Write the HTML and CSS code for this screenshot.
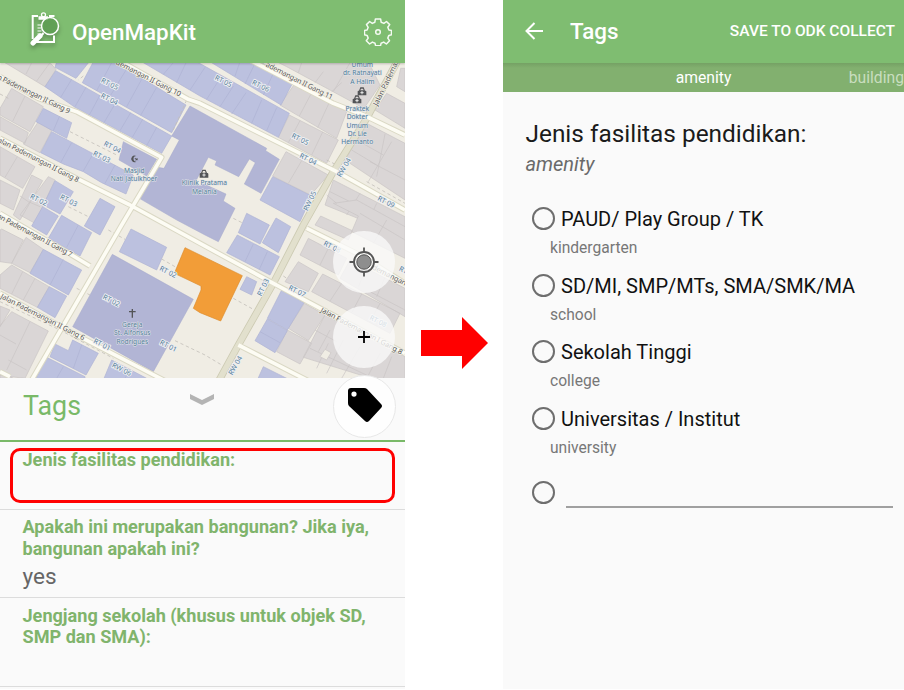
FILE: index.html
```html
<!DOCTYPE html>
<html lang="id">
<head>
<meta charset="utf-8">
<title>OpenMapKit</title>
<link rel="stylesheet" href="styles.css">
</head>
<body>
<main class="stage">
<section class="phone phone-map">
  <header class="appbar">
    <svg class="logo" viewBox="0 0 36 40" width="36" height="40">
      <g fill="none" stroke="#fff">
        <path d="M12 6H6.700V29M8 32H28V25.500M23 6h5.500" stroke-width="2"/>
        <path d="M11.500 15h3.500M11.500 18h3.500M11.500 21h4M11.500 24h4" stroke-width="1.200"/>
        <circle cx="17.500" cy="4.800" r="2" stroke-width="1.300"/>
        <path d="M12.500 8h9.500" stroke-width="3.500"/>
        <path d="M17.500 23 14 27" stroke-width="2"/>
        <path d="M14 26 7 33" stroke-width="5" stroke-linecap="round"/>
        <circle cx="24" cy="16" r="8.500" fill="#5fa154" fill-opacity=".75" stroke-width="1.500"/>
      </g>
    </svg>
    <h1 class="app-title">OpenMapKit</h1>
    <svg class="gear" viewBox="0 0 28 28" width="28" height="28" fill="none" stroke="#f4faf2" stroke-width="1.500" stroke-linejoin="round">
      <path d="M11.400 1h5.200l.6 3.300 2.700 1.100 2.600-1.900 3.200 3.100-1.900 2.700 1.100 2.700 2.600.4v4.400l-2.600.6-1.100 2.700 1.700 2.600-3.100 3.300-2.700-1.900-2.600 1.100-.6 2.600h-4.900l-.6-2.600-2.600-1.100L5.600 26l-3.300-3.200 1.900-2.700-1.100-2.700-2.600-.6v-4.400l2.600-.4 1.100-2.700-1.700-2.700 3.100-3.100 2.700 1.900 2.500-1.100z"/>
      <circle cx="14" cy="14" r="2.300"/>
    </svg>
  </header>
  <div class="map">
    <svg class="map-art" viewBox="0 189 1215 945" width="405" height="315">
      <rect y="189" width="1215" height="945" fill="#f0ede4"/>
      <g class="gray">
        <g transform="translate(0 180)">
          <path d="M15 8H150L168 28 135 80ZM95 8 78 42M150 8 110 63M35 85 130 140 90 215 0 165V145ZM75 108 38 184M0 170 85 218 75 250 0 210ZM115 185 155 212 120 278 70 252ZM0 260 105 320 68 385 0 345ZM52 290 15 352M0 360 60 390 40 450 0 430ZM95 345 128 362 60 480 40 465ZM145 350 165 360 105 490 60 465ZM60 408 85 425M85 425 120 440"/>
        </g>
        <g transform="translate(600 180)">
          <path d="M230 5H505L540 75 492 145 260 20ZM305 8 295 38M370 35 345 68M425 68 395 95M450 8 400 95M285 70 440 155 410 235 240 135ZM335 98 298 168M388 127 353 203M268 165 415 240 380 310 235 232ZM300 182 265 248M368 216 335 285M258 275 385 345 332 405 218 348ZM305 302 265 370M560 100 615 130V205L525 150ZM602 25H615V95L590 80ZM500 190 615 250V420L435 300ZM555 222 530 350M470 240 550 285M455 270 530 315M575 245 505 365M510 305 615 360M400 360 615 470V500L510 490 375 435ZM480 400 440 465M530 430 505 485M390 395 520 460"/>
        </g>
        <g transform="translate(0 660)">
          <path d="M5 27 70 60 35 130 0 125V30ZM78 52 130 88 90 158 35 130ZM35 135 147 200 112 262 0 205V165ZM68 155 35 222M105 175 70 240M0 258 30 270 0 320ZM35 275 145 333 75 475-10 465V330ZM90 305 20 450M0 345 48 372M25 420 80 450M0 455 40 475H0Z"/>
        </g>
        <g transform="translate(600 660)">
          <path d="M362-12 457 32 445 60 345 15ZM470-60 615 20V115L455 35 475-12 400-50ZM410-50 380-75M480-20 615 60M560 0 520 70M325 55 440 115 415 165 300 105ZM385 85 360 135M295 125 355 160 325 215 255 185ZM368 162 600 280 570 340 335 215ZM425 190 390 243M485 222 455 278M540 250 510 305M450 120 615 205V290L420 175ZM500 145 475 200M555 172 530 230M510 215 615 270M313 250 375 285 325 362 265 325ZM262 330 335 370 300 432 230 395ZM375 285 615 410V480H530L310 412ZM345 330 410 365M385 370 350 445M430 360 380 460M480 380 425 475M540 400 500 475M330 385 520 475M575 410 550 475M390 330 355 395"/>
          <path class="gap" d="M375 388 393 398 380 420 360 410Z"/>
        </g>
      </g>
      <g class="blue">
        <g transform="translate(0 180)">
          <path d="M170 5H268L228 55 165 22ZM167 32 515 228 485 280 225 142 135 80ZM215 58 182 112M258 82 225 140M300 105 268 165M345 132 312 188M392 158 360 212M428 178 397 232M470 202 440 257M280 5H345L558 135 515 218 247 68ZM335 8 290 92M378 30 328 112M425 58 380 140M470 82 422 166M425 5H590L868 160 835 232 600 108ZM520 8 490 43M558 8 530 68M615 22 570 90M660 55 620 118M700 78 660 140M738 98 695 162M785 120 755 190M830 143 800 212M630 5H780L880 65 843 135ZM720 5 705 48M765 10 735 72M820 40 790 105M130 145 215 188 200 235 108 185ZM178 170 160 212M155 215 400 345 378 402 305 368 250 335 190 312 122 278ZM215 248 182 308M280 280 250 333M345 315 315 370M165 362 220 395 180 462 130 435ZM300 415 345 440 300 525 253 498ZM128 440 175 468 140 525 95 498Z"/>
        </g>
        <g transform="translate(600 180)"><path d="M218 350 335 408 300 485 180 420Z"/></g>
        <g transform="translate(0 660)">
          <path d="M185-14 275 38 240 108 145 55ZM235 15 200 82M393 27 500 82 470 150 358 95ZM130 88 245 150 205 225 90 160ZM190 118 150 195M148 200 200 228 165 293 112 262ZM165 372 205 392 218 360 295 400 258 465 150 410ZM245 375 220 445M140 412 255 470V480H105ZM190 440 170 475M335 420 440 475V480H310ZM390 448 375 475"/>
        </g>
        <g transform="translate(600 660)">
          <path d="M140-20 208 15 180 72 115 38ZM228-6 272 20 235 98 187 68ZM112 45 238 110 210 165 80 98ZM160 72 135 125M202 95 178 148M140 170 170 185 155 225 120 208ZM245 210 312 248 262 330 202 295ZM202 297 262 332 225 398 165 362ZM180 335 240 368M190 440 270 480H172Z"/>
        </g>
      </g>
      <g class="civic">
        <g transform="translate(0 180)">
          <path d="M570 138 800 265 797 272 838 298 783 400 733 372 766 308 748 297 716 350 645 315 650 303 625 292 585 368 600 378 612 372 678 402 670 423 705 445 655 545 615 525 530 480 418 415 472 322 492 325 538 240 515 228ZM370 245 470 298 440 348 357 300Z"/>
        </g>
        <path d="M337 763 580 898 460 1115 218 980Z"/>
      </g>
      <path class="selected" d="M555 743 727 827 662 963 600 938 580 925 603 870V858L523 820Z"/>
      <g class="paths">
        <path d="M210 395 350 465M560 300 520 390M0 282 25 295M205 620 265 650M325 690 375 718M485 777 525 800M230 865 270 885M700 895 760 928M525 1022 615 1065 665 1095M250 228 235 240M1100 545 1215 610M0 905 180 990 340 1075M980 480 1010 495M850 828 865 838M700 655 730 670"/>
      </g>
      <g class="road-main casing"><path d="M1210 150 1100 355 1000 515 910 675 820 850 715 1035 655 1145"/></g>
      <g class="road casing">
        <path d="M320 160 565 298 600 310 1010 515 1215 630M0 230 115 295 230 335 485 472 365 675 95 1140M0 415 200 520 390 615 600 730 820 850 1215 1060M0 640 215 765 270 798M0 880 210 995 500 1145M740 175 1000 310 1090 345 1215 405M920 685 1080 765 1215 850M715 1035 930 1145M0 1115 30 1130"/>
      </g>
      <g class="road-main"><path d="M1210 150 1100 355 1000 515 910 675 820 850 715 1035 655 1145"/></g>
      <g class="road">
        <path d="M320 160 565 298 600 310 1010 515 1215 630M0 230 115 295 230 335 485 472 365 675 95 1140M0 415 200 520 390 615 600 730 820 850 1215 1060M0 640 215 765 270 798M0 880 210 995 500 1145M740 175 1000 310 1090 345 1215 405M920 685 1080 765 1215 850M715 1035 930 1145M0 1115 30 1130"/>
      </g>
      <g class="street">
        <text transform="translate(-10 236) rotate(26)" textLength="240">n Pademangan II Gang 9</text>
        <text transform="translate(346 192) rotate(27)" textLength="216">demangan II Gang 10</text>
        <text transform="translate(796 199) rotate(27)" textLength="222">ademangan II Gang 11</text>
        <text transform="translate(-8 425) rotate(27)" textLength="270">alan Pademangan II Gang 8</text>
        <text transform="translate(-10 653) rotate(28)" textLength="252">an Pademangan II Gang 7</text>
        <text transform="translate(0 894) rotate(27)" textLength="280">Jalan Pademangan II Gang 6</text>
        <text transform="translate(960 935) rotate(28)" textLength="275">Jalan Pademangan I Gang 8</text>
        <text transform="translate(1115 807) rotate(27)">demangan</text>
        <text transform="translate(1132 319) rotate(-64)">Jalan Pademan</text>
      </g>
      <g class="district">
        <text transform="translate(326 258) rotate(27)">RT 05</text><text transform="translate(325 304) rotate(27)">RT 04</text>
        <text transform="translate(334 448) rotate(27)">RT 04</text><text transform="translate(302 477) rotate(27)">RT 03</text>
        <text transform="translate(113 606) rotate(27)">RT 02</text><text transform="translate(203 608) rotate(27)">RT 03</text>
        <text transform="translate(667 250) rotate(27)">RT 05</text><text transform="translate(779 264) rotate(27)">RT 06</text>
        <text transform="translate(897 424) rotate(27)">RT 05</text><text transform="translate(921 484) rotate(27)">RT 04</text>
        <text transform="translate(1155 612) rotate(27)">RT 09</text><text transform="translate(1038 506) rotate(-60)">RW 04</text>
        <text transform="translate(936 606) rotate(-64)">RW 05</text><text transform="translate(331 908) rotate(27)">RT 02</text>
        <text transform="translate(501 822) rotate(27)">RT 02</text><text transform="translate(303 1040) rotate(27)">RT 01</text>
        <text transform="translate(502 1044) rotate(27)">RT 01</text><text transform="translate(362 1114) rotate(27)">RW 06</text>
        <text transform="translate(993 747) rotate(27)">RT 08</text><text transform="translate(888 880) rotate(27)">RT 07</text>
        <text transform="translate(796 865) rotate(-64)">RT 03</text><text transform="translate(712 1100) rotate(-60)">RW 04</text>
        <text transform="translate(1131 970) rotate(27)">RT 08</text><text transform="translate(1220 823) rotate(27)">RT 08</text>
      </g>
      <g class="poi">
        <text x="403" y="518">Masjid</text><text x="402" y="543">Nati Jatulkhoer</text>
        <text x="613" y="556">Klinik Pratama</text><text x="613" y="581">Melania</text>
        <text x="397" y="981">Gereja</text><text x="397" y="1006">St. Alfonsus</text><text x="397" y="1031">Rodrigues</text>
        <text x="1087" y="201">Umum</text><text x="1087" y="226">dr. Ratnayati</text><text x="1087" y="251">A Halim</text>
        <text x="1072" y="333">Praktek</text><text x="1072" y="358">Dokter</text><text x="1072" y="383">Umum</text><text x="1072" y="408">Dr. Lie</text><text x="1072" y="433">Hermanto</text>
      </g>
      <g fill="#535457">
        <path id="clinic" d="M-13 12V0L-11-2H-9L-5-12H5L9-2H11L13 0V12ZM-5-3H5L3-8H-3Z" transform="translate(612 521)"/>
        <use href="#clinic" x="474" y="-247"/><use href="#clinic" x="459" y="-223"/>
        <path d="M409 468A10 10 0 1 0 409 485 8 8 0 1 1 409 468ZM407 473 410 476 414 474 412 478 415 481 410 480 407 483V478L403 476 407 475Z"/>
        <path d="M395 927h4v6h8v4h-8v16h-4v-16h-8v-4h8Z"/>
      </g>
      <g stroke="#fff" stroke-width="2.500"><path d="M612 520v10M607 525h10M1086 273v10M1081 278h10M1071 297v10M1066 302h10"/></g>
    </svg>
    <div class="map-controls">
      <button class="round" aria-label="Lokasi">
        <svg viewBox="0 0 30 30" width="30" height="30"><circle cx="15" cy="15" r="7.200" fill="#8e8e8e" stroke="#555"/><circle cx="15" cy="15" r="10" fill="none" stroke="#555" stroke-width="1.800"/><path d="M15 .5V5M15 25v4.500M.5 15H5M25 15h4.500" stroke="#555" stroke-width="1.800"/></svg>
      </button>
      <button class="round" aria-label="Tambah">
        <svg viewBox="0 0 14 14" width="14" height="14"><path d="M7 1v12M1 7h12" stroke="#000" stroke-width="1.800"/></svg>
      </button>
    </div>
  </div>
  <div class="sheet-head">
    <h2 class="sheet-title">Tags</h2>
    <svg class="chevron" viewBox="0 0 24 11" width="24" height="11"><path d="M0 0 12 6 24 0V5L12 11 0 5Z" fill="#b4b4b4"/></svg>
    <span class="tag-button"><svg viewBox="0 0 36 36" width="36" height="36"><path fill-rule="evenodd" d="M4 1H17Q19 1 20 2L34 17Q36 19 34 21L22 34Q20 36 18 34L2 19Q1 18 1 16V4Q1 1 4 1ZM7 4.500a2.600 2.600 0 1 0 0 5.200 2.600 2.600 0 1 0 0-5.200Z"/></svg></span>
  </div>
  <div class="rows">
    <article class="row row-first"><h3>Jenis fasilitas pendidikan:</h3><span class="highlight"></span></article>
    <article class="row row-building"><h3>Apakah ini merupakan bangunan? Jika iya,<br>bangunan apakah ini?</h3><p>yes</p></article>
    <article class="row row-level"><h3>Jengjang sekolah (khusus untuk objek SD,<br>SMP dan SMA):</h3></article>
  </div>
</section>
<div class="between">
  <svg viewBox="0 0 67 52" width="67" height="52"><path d="M0 13H41V0L67 26 41 52V39H0Z" fill="#f00"/></svg>
</div>
<section class="phone phone-form">
  <header class="appbar">
    <svg class="back" viewBox="0 0 18 18" width="18" height="18"><path d="M18 9H1.500M9.500 1 1.500 9l8 8" fill="none" stroke="#fff" stroke-width="2"/></svg>
    <h1 class="form-title">Tags</h1>
    <span class="save">SAVE TO ODK COLLECT</span>
  </header>
  <nav class="tabs"><span class="tab">amenity</span><span class="tab tab-next">building</span></nav>
  <div class="form">
    <h2>Jenis fasilitas pendidikan:</h2>
    <p class="key">amenity</p>
    <div class="option"><i class="radio"></i><span class="name">PAUD/ Play Group / TK</span><span class="value">kindergarten</span></div>
    <div class="option"><i class="radio"></i><span class="name">SD/MI, SMP/MTs, SMA/SMK/MA</span><span class="value">school</span></div>
    <div class="option"><i class="radio"></i><span class="name">Sekolah Tinggi</span><span class="value">college</span></div>
    <div class="option"><i class="radio"></i><span class="name">Universitas / Institut</span><span class="value">university</span></div>
    <div class="custom"><i class="radio"></i><span class="line"></span></div>
  </div>
</section>
</main>
</body>
</html>
```
FILE: styles.css
```css
* { box-sizing: border-box; }
body { margin: 0; background: #fff; font-family: Roboto, sans-serif; overflow: hidden; }
h1, h2, h3, p { margin: 0; }
.stage { display: grid; grid-template-columns: 405px 98px 401px; height: 690px; }
.phone { height: 689px; background: #fafafa; overflow: hidden; }
.appbar { display: flex; align-items: center; height: 63px; background: #7fbd71; color: #fff; }
.phone-map .appbar { position: relative; z-index: 1; box-shadow: 0 1px 2px #0003; }
.logo { margin: -3px 0 0 26px; filter: drop-shadow(0 3px 2px #0004); }
.app-title, .form-title { font-size: 22.4px; font-weight: 500; line-height: 30px; white-space: nowrap; }
.app-title { margin: 1px 0 0 10px; }
.gear { margin: 0 13px 0 auto; }

.map { position: relative; height: 315px; overflow: hidden; }
.map-art { display: block; }
.gray path { fill: #dad6d6; stroke: #c9c4c4; stroke-width: 2; }
.gray .gap { fill: #f0ede4; }
.blue path { fill: #bcc1df; stroke: #adb2d3; stroke-width: 2; }
.civic path { fill: #b2b5d5; stroke: #a5a9ca; stroke-width: 1.5; }
.selected { fill: #f29d38; stroke: #dc8d2d; stroke-width: 2; }
.paths path { fill: none; stroke: #c4c1bb; stroke-width: 2.5; stroke-dasharray: 10 8; }
.road path { fill: none; stroke: #fdfcf4; stroke-width: 11; stroke-linejoin: round; }
.road.casing path { stroke: #dad8c4; stroke-width: 17; }
.road-main path { fill: none; stroke: #e2e0cd; stroke-width: 17; }
.road-main.casing path { stroke: #cccab2; stroke-width: 22; }
.street text, .district text, .poi text { font-family: "Noto Sans", sans-serif; paint-order: stroke; stroke-linejoin: round; }
.street text { font-size: 22px; fill: #535356; stroke: #f6f3e9; stroke-width: 4; }
.district text { font-size: 21px; text-anchor: middle; fill: #56809a; stroke: #eeeff2; stroke-width: 6; }
.poi text { font-size: 20px; text-anchor: middle; fill: #4f7c98; stroke: #e3e4ea; stroke-width: 3; }
.map-controls { position: absolute; right: 10px; top: 168px; display: flex; flex-direction: column; gap: 13px; }
.round { display: grid; place-items: center; width: 62px; height: 62px; padding: 0; border: 0; border-radius: 50%; background: #fafafac8; }

.sheet-head { position: relative; height: 64px; display: flex; border-bottom: 2px solid #79b968; }
.sheet-title { margin: 10px 0 0 23px; font-size: 26.8px; line-height: 36px; font-weight: 400; color: #79b968; }
.chevron { position: absolute; left: 190px; top: 16px; }
.tag-button { display: grid; place-items: center; width: 63px; height: 63px; margin: -3px 9px 0 auto; border: 1px solid #e8e8e8; border-radius: 50%; background: #fefefe; }
.tag-button svg { margin: -3px 0 0; }
.row { position: relative; padding-left: 22.5px; border-bottom: 1px solid #dcdcdc; }
.row h3 { font-size: 18.1px; line-height: 21.5px; font-weight: 700; color: #80b46c; white-space: nowrap; }
.row p { font-size: 22.5px; line-height: 28px; margin-top: 3px; color: #666; }
.row-first { height: 68px; padding-top: 7px; }
.row-building { height: 88px; padding-top: 6px; }
.row-level { height: 89px; padding-top: 6.5px; }
.highlight { position: absolute; left: 10px; top: 6px; width: 385px; height: 55px; border: 3px solid #f00; border-radius: 10px; }
.between { padding: 317px 0 0 16px; }

.back { margin: -2px 0 0 22px; }
.form-title { margin: -1px 0 0 27px; }
.save { margin: -1px 9px 0 auto; font-size: 15.5px; font-weight: 500; white-space: nowrap; }
.tabs { position: relative; height: 29px; background: linear-gradient(#75a164, #82b06f 5px); font-size: 15.7px; line-height: 29px; color: #fff; display: flex; justify-content: center; }
.tab-next { position: absolute; right: 0; color: #c9debf; }
.form { padding: 27px 11px 0 22.5px; }
.form h2 { font-size: 24.4px; line-height: 30px; font-weight: 400; color: #1b1b1b; white-space: nowrap; }
.key { font-size: 20px; line-height: 30px; font-style: italic; color: #6a6a6a; }
.option { display: grid; grid-template-columns: 29px 1fr; height: 66.6px; padding: 28px 0 0 6.5px; align-content: start; }
.radio { width: 23px; height: 23px; border: 2px solid #6e6e6e; border-radius: 50%; }
.name { font-size: 20px; line-height: 24px; color: #111; white-space: nowrap; }
.value { grid-column: 1 / 3; padding-left: 18px; margin-top: 7px; font-size: 15.6px; line-height: 20px; color: #777; }
.custom { display: flex; align-items: flex-end; gap: 10.5px; padding: 36px 0 0 6.5px; }
.line { flex: 1; height: 2px; background: #a0a0a0; margin-bottom: -4px; }
```
